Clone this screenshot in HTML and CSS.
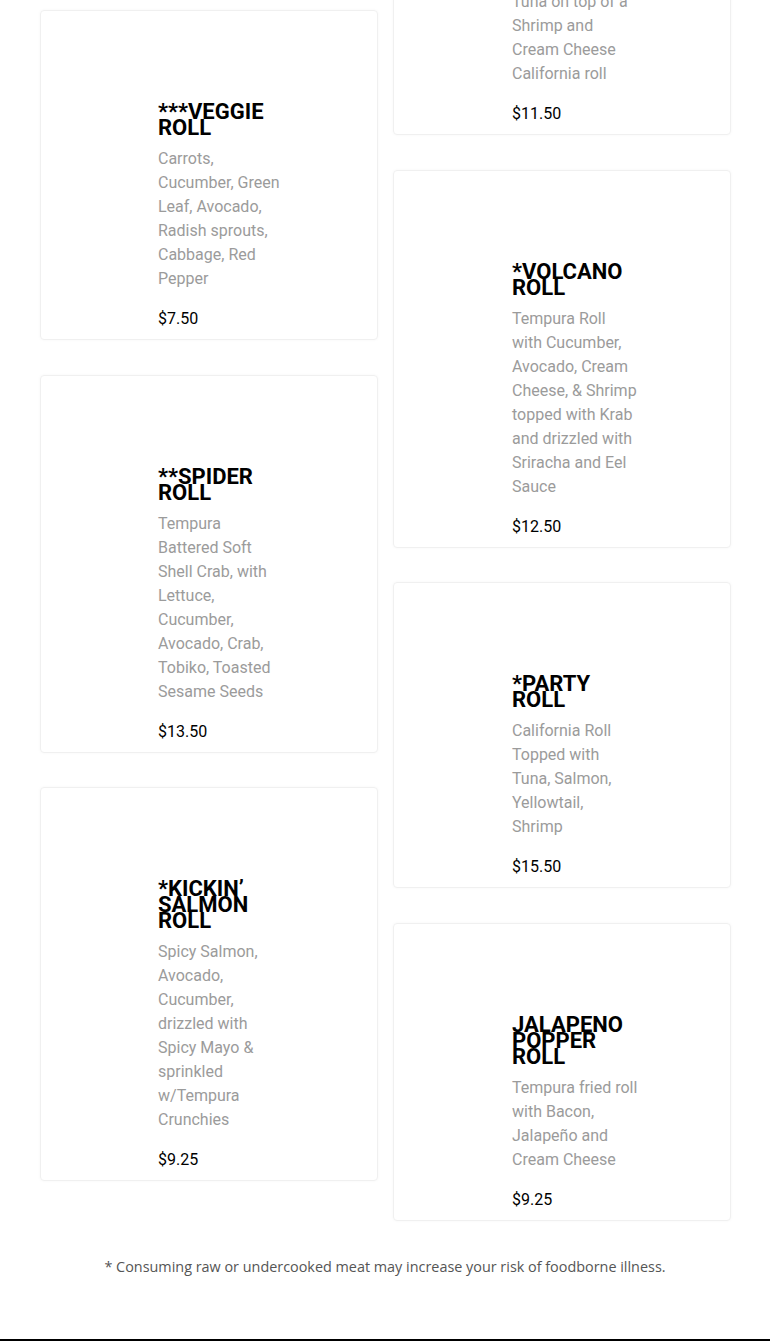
FILE: index.html
```html
<!DOCTYPE html>
<html lang="en">
<head>
    <meta charset="UTF-8">
    <meta name="viewport" content="width=device-width, initial-scale=1.0">
    <title>Sushi Rolls | Menu</title>
    <link rel="stylesheet" href="styles.css">
</head>
<body>

    <main class="menu">
        <!-- left column -->
        <div class="menu-col">
            <article class="roll-card">
                <h3 class="roll-name">***VEGGIE ROLL</h3>
                <p class="roll-desc">Carrots, Cucumber, Green Leaf, Avocado, Radish sprouts, Cabbage, Red Pepper</p>
                <div class="roll-price">$7.50</div>
            </article>

            <article class="roll-card">
                <h3 class="roll-name">**SPIDER ROLL</h3>
                <p class="roll-desc">Tempura Battered Soft Shell Crab, with Lettuce, Cucumber, Avocado, Crab, Tobiko, Toasted Sesame Seeds</p>
                <div class="roll-price">$13.50</div>
            </article>

            <article class="roll-card">
                <h3 class="roll-name">*KICKIN&rsquo; SALMON ROLL</h3>
                <p class="roll-desc">Spicy Salmon, Avocado, Cucumber, drizzled with Spicy Mayo &amp; sprinkled w/Tempura Crunchies</p>
                <div class="roll-price">$9.25</div>
            </article>
        </div>

        <!-- right column (page is scrolled, first card is cut off) -->
        <div class="menu-col menu-col--scrolled">
            <article class="roll-card">
                <h3 class="roll-name">*DRAGON ROLL</h3>
                <p class="roll-desc">Seared Albacore Tuna on top of a Shrimp and Cream Cheese California roll</p>
                <div class="roll-price">$11.50</div>
            </article>

            <article class="roll-card">
                <h3 class="roll-name">*VOLCANO ROLL</h3>
                <p class="roll-desc">Tempura Roll with Cucumber, Avocado, Cream Cheese, &amp; Shrimp topped with Krab and drizzled with Sriracha and Eel Sauce</p>
                <div class="roll-price">$12.50</div>
            </article>

            <article class="roll-card">
                <h3 class="roll-name">*PARTY ROLL</h3>
                <p class="roll-desc">California Roll Topped with Tuna, Salmon, Yellowtail, Shrimp</p>
                <div class="roll-price">$15.50</div>
            </article>

            <article class="roll-card">
                <h3 class="roll-name">JALAPENO POPPER ROLL</h3>
                <p class="roll-desc">Tempura fried roll with Bacon, Jalapeño and Cream Cheese</p>
                <div class="roll-price">$9.25</div>
            </article>
        </div>
    </main>

    <p class="menu-note">* Consuming raw or undercooked meat may increase your risk of foodborne illness.</p>

    <footer class="site-footer"></footer>

</body>
</html>
```

FILE: styles.css
```css
/* sushi menu */
* { box-sizing: border-box; }

body {
    margin: 0;
    background: #fff;
    color: #000;
    font-family: Roboto, 'Liberation Sans', sans-serif;
}

/* two column card grid */
.menu {
    display: grid;
    grid-template-columns: 338px 338px;
    column-gap: 15px;
    align-items: start;
    padding: 10px 0 0 40px;
}

.menu-col {
    display: flex;
    flex-direction: column;
    gap: 34.5px;
}

.menu-col--scrolled { margin-top: -181px; }

.menu-col--scrolled .roll-card { padding-left: 118px; }

.roll-card {
    border: 1px solid #f0f0f0;
    border-radius: 4px;
    box-shadow: 0 0 3px rgba(0, 0, 0, 0.04);
    padding: 93px 20px 8px 117px;
}

.roll-name {
    width: 125.5px;
    margin: 0 0 11px 0;
    font-size: 22px;
    font-weight: 700;
    line-height: 16px;
    text-transform: uppercase;
}

.roll-desc {
    width: 125.5px;
    margin: 0 0 16px 0;
    font-size: 16px;
    line-height: 24px;
    color: #9b9b9b;
}

.roll-price {
    font-size: 16px;
    line-height: 24px;
}

/* footer */
.menu-note {
    margin: 36px 0 62px 0;
    text-align: center;
    font-family: 'Open Sans', 'Liberation Sans', sans-serif;
    font-size: 14.4px;
    line-height: 20px;
    color: #555;
}

.site-footer {
    height: 60px;
    background: #000;
}
```
